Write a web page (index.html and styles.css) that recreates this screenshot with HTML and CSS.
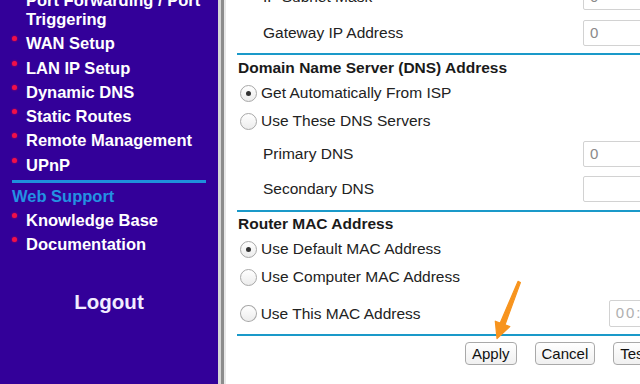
FILE: index.html
```html
<!DOCTYPE html>
<html lang="en">
<head>
  <meta charset="utf-8">
  <title>Router Setup</title>
  <link rel="stylesheet" href="styles.css">
</head>
<body>
  <div class="sidebar">
    <ul class="menu">
      <li class="wrap">Port Forwarding / Port Triggering</li>
      <li>WAN Setup</li>
      <li>LAN IP Setup</li>
      <li>Dynamic DNS</li>
      <li>Static Routes</li>
      <li>Remote Management</li>
      <li>UPnP</li>
    </ul>
    <div class="side-rule"></div>
    <h4 class="side-head">Web Support</h4>
    <ul class="menu">
      <li>Knowledge Base</li>
      <li>Documentation</li>
    </ul>
    <div class="logout">Logout</div>
  </div>

  <div class="divider"></div>

  <form class="content">
    <div class="row sub">
      <span class="label">IP Subnet Mask</span>
      <span class="field">0</span>
    </div>
    <div class="row gw">
      <span class="label">Gateway IP Address</span>
      <span class="field">0</span>
    </div>

    <div class="rule"></div>
    <h4 class="heading h-dns">Domain Name Server (DNS) Address</h4>
    <div class="radio-row r1"><span class="radio checked"></span>Get Automatically From ISP</div>
    <div class="radio-row r2"><span class="radio"></span>Use These DNS Servers</div>
    <div class="row pdns">
      <span class="label">Primary DNS</span>
      <span class="field">0</span>
    </div>
    <div class="row sdns">
      <span class="label">Secondary DNS</span>
      <span class="field"></span>
    </div>

    <div class="rule r-mac"></div>
    <h4 class="heading h-mac">Router MAC Address</h4>
    <div class="radio-row r3"><span class="radio checked"></span>Use Default MAC Address</div>
    <div class="radio-row r4"><span class="radio"></span>Use Computer MAC Address</div>
    <div class="radio-row r5">
      <span class="radio"></span><span class="mac-label">Use This MAC Address</span>
      <span class="field mac">00:</span>
    </div>

    <div class="rule r-end"></div>
    <div class="buttons">
      <button type="button" class="btn">Apply</button>
      <button type="button" class="btn">Cancel</button>
      <button type="button" class="btn">Test</button>
    </div>
  </form>

  <svg class="arrow" width="50" height="70" viewBox="0 0 50 70">
    <polygon points="38,6.4 40.4,7.6 25,49.8 29.8,51.6 17,63.5 15.3,46.2 20.2,48" fill="#f7941e" stroke="#f7941e" stroke-width="1.2" stroke-linejoin="round"/>
  </svg>
</body>
</html>
```

FILE: styles.css
```css
* {
  box-sizing: border-box;
}

body {
  margin: 0;
  height: 384px;
  overflow: hidden;
  display: flex;
  background: #fff;
  font-family: "Liberation Sans", Arial, sans-serif;
  position: relative;
}

/* left navigation */
.sidebar {
  width: 218px;
  flex: none;
  background: #330099;
  color: #fff;
  padding-left: 12px;
}

.menu {
  list-style: none;
  margin: 0;
  padding: 0;
  font-size: 16.5px;
  font-weight: bold;
  line-height: 19px;
}

.menu:first-child {
  margin-top: -9px;
}

.menu li {
  position: relative;
  padding-left: 14px;
  margin-bottom: 5.3px;
}

.menu li:before {
  content: "";
  position: absolute;
  left: 0;
  top: 2px;
  width: 5px;
  height: 5px;
  border-radius: 50%;
  background: #f0104a;
  box-shadow: 0 0 2px #e0003c;
}

.menu li.wrap {
  width: 190px;
}

.side-rule {
  height: 3px;
  width: 194px;
  margin-top: 2px;
  background: #1f8fdc;
}

.side-head {
  margin: 4px 0 5px 0;
  font-size: 16.5px;
  line-height: 19px;
  color: #2392e2;
}

.logout {
  margin-top: 36px;
  width: 194px;
  text-align: center;
  font-size: 20.5px;
  font-weight: bold;
  color: #f1ecff;
}

.divider {
  width: 8px;
  flex: none;
  background: linear-gradient(to right, #d6d6d6 0, #d6d6d6 3px, #8c8c8c 3px, #8c8c8c 6px, #e8e8e8 6px);
}

/* main form */
.content {
  width: 500px;
  flex: none;
  padding-left: 11px;
  color: #222;
  font-size: 15.5px;
}

.row {
  display: flex;
  align-items: center;
  padding-left: 26px;
}

.label {
  width: 320px;
  flex: none;
}

.field {
  width: 120px;
  height: 26px;
  border: 1px solid #d2d2d2;
  border-radius: 2px;
  padding-left: 6px;
  line-height: 24px;
  color: #8a8a8a;
  font-size: 15px;
}

.sub { height: 36px; margin-top: -21px; }
.gw { height: 36px; }
.pdns { height: 34px; }
.sdns { height: 36px; }

.rule {
  height: 2px;
  margin-top: 2px;
  background: #1a99c9;
}

.r-mac { margin-top: 3px; }

.heading {
  margin: 0;
  padding-left: 1px;
  display: flex;
  align-items: center;
  font-size: 15.5px;
  color: #1a1a1a;
}

.h-dns { height: 26px; }
.h-mac { height: 24px; }

.radio-row {
  display: flex;
  align-items: center;
  padding-left: 3px;
}

.r1 { height: 24px; }
.r2 { height: 32px; }
.r3 { height: 26px; }
.r4 { height: 30px; }
.r5 { height: 40px; padding-top: 3px; }

.radio {
  width: 17px;
  height: 17px;
  margin-right: 4px;
  border: 1px solid #a8a8a8;
  border-radius: 50%;
  background: linear-gradient(#ffffff, #ececec);
  display: flex;
  align-items: center;
  justify-content: center;
}

.radio.checked:after {
  content: "";
  width: 5px;
  height: 5px;
  border-radius: 50%;
  background: #333;
}

.mac-label {
  width: 348px;
  flex: none;
}

.field.mac {
  height: 27px;
  color: #b0b0b0;
  padding-left: 6px;
  letter-spacing: 2px;
}

.buttons {
  display: flex;
  gap: 18px;
  margin-top: 6px;
  padding-left: 228px;
}

.btn {
  height: 23px;
  padding: 0 6px;
  border: 1px solid #a9a9a9;
  border-radius: 4px;
  background: linear-gradient(#ffffff, #f0f0f0);
  font-family: "Liberation Sans", Arial, sans-serif;
  font-size: 15px;
  color: #111;
}

.arrow {
  position: absolute;
  left: 480px;
  top: 275px;
}
```
